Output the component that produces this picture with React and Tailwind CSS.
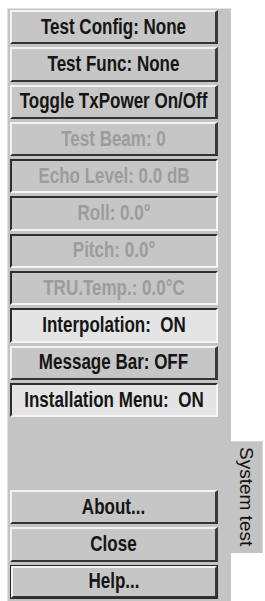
import React from "react";

const font = { fontFamily: '"Liberation Sans", Arial, sans-serif' };

function Btn({ label, kind = "raised", disabled = false, light = false }) {
  const base =
    "h-[34.3px] w-full flex items-center justify-center text-[17px] font-bold whitespace-pre leading-none";
  const border =
    kind === "raised"
      ? "border-t-2 border-l-2 border-b-2 border-r-[3px] border-t-[#f2f2f2] border-l-[#f2f2f2] border-b-[#333333] border-r-[#3a3a3a]"
      : "border-t-2 border-l-2 border-b-2 border-r-2 border-t-[#2e2e2e] border-l-[#2e2e2e] border-b-[#f4f4f4] border-r-[#f4f4f4]";
  const bg = light ? "bg-[#e4e4e4]" : "bg-[#c6c6c6]";
  const color = disabled ? "text-[#9c9c9c]" : "text-[#151515]";
  return (
    <div className={`${base} ${border} ${bg} ${color}`}>
      <span className="inline-block scale-y-[1.25]">{label}</span>
    </div>
  );
}

export default function App() {
  return (
    <div className="w-[265px] h-[601px] bg-white overflow-hidden flex flex-row" style={font}>
      <div className="ml-[7px] mt-[8px] w-[224px] h-[593px] bg-[#c4c4c4] border-t border-l border-[#e2e2e2] flex flex-col pt-[1px] pl-[2px] pr-[13px] pb-[2px]">
        <div className="flex flex-col gap-[3px]">
          <Btn label="Test Config: None" />
          <Btn label="Test Func: None" />
          <Btn label="Toggle TxPower On/Off" />
          <Btn label="Test Beam: 0" disabled />
          <Btn label="Echo Level: 0.0 dB" kind="sunken" disabled />
          <Btn label="Roll: 0.0°" kind="sunken" disabled />
          <Btn label="Pitch: 0.0°" kind="sunken" disabled />
          <Btn label="TRU.Temp.: 0.0°C" kind="sunken" disabled />
          <Btn label="Interpolation:  ON" kind="sunken" light />
          <Btn label="Message Bar: OFF" />
          <Btn label="Installation Menu:  ON" kind="sunken" light />
        </div>
        <div className="mt-auto flex flex-col gap-[3px]">
          <Btn label="About..." />
          <Btn label="Close" />
          <div className="border border-[#262626]">
            <div className="h-[32.3px] w-full flex items-center justify-center text-[17px] font-bold leading-none text-[#151515] bg-[#c6c6c6] border-t-2 border-l-2 border-b-2 border-r-2 border-t-[#f2f2f2] border-l-[#f2f2f2] border-b-[#333333] border-r-[#3a3a3a]">
              <span className="inline-block scale-y-[1.25]">Help...</span>
            </div>
          </div>
        </div>
      </div>
      <div className="flex flex-col">
        <div className="mt-[441px] w-[32px] h-[112px] bg-[#c4c4c4] border-t border-r border-[#d8d8d8] flex items-start justify-center pt-[5px]">
          <span className="[writing-mode:vertical-rl] text-[19px] text-[#111111] leading-none">
            System test
          </span>
        </div>
      </div>
    </div>
  );
}
